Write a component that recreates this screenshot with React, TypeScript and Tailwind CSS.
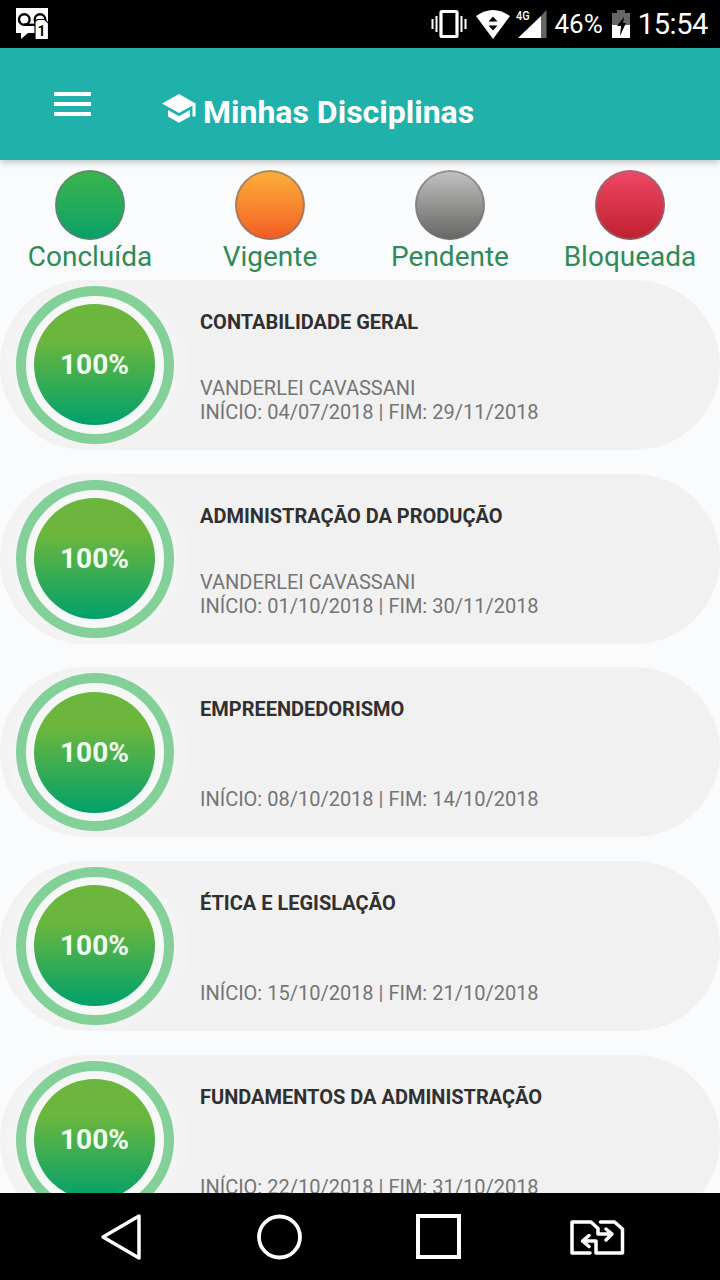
import React from 'react';

interface Subject {
  title: string;
  teacher?: string;
  start: string;
  end: string;
  progress: number;
}

const SUBJECTS: Subject[] = [
  { title: 'CONTABILIDADE GERAL', teacher: 'VANDERLEI CAVASSANI', start: '04/07/2018', end: '29/11/2018', progress: 100 },
  { title: 'ADMINISTRAÇÃO DA PRODUÇÃO', teacher: 'VANDERLEI CAVASSANI', start: '01/10/2018', end: '30/11/2018', progress: 100 },
  { title: 'EMPREENDEDORISMO', start: '08/10/2018', end: '14/10/2018', progress: 100 },
  { title: 'ÉTICA E LEGISLAÇÃO', start: '15/10/2018', end: '21/10/2018', progress: 100 },
  { title: 'FUNDAMENTOS DA ADMINISTRAÇÃO', start: '22/10/2018', end: '31/10/2018', progress: 100 },
];

const LEGEND = [
  { label: 'Concluída', color: 'from-[#39b54a] to-[#00a069]' },
  { label: 'Vigente', color: 'from-[#fbb03b] to-[#f15a24]' },
  { label: 'Pendente', color: 'from-[#c4c4c4] to-[#666563]' },
  { label: 'Bloqueada', color: 'from-[#f04866] to-[#be1e2d]' },
];

const StatusBar = () => (
  <div className="flex h-12 shrink-0 items-center bg-black pr-3 pl-[15px] text-white">
    <svg width="34" height="34" viewBox="0 0 34 34">
      <path d="M1 1h32v25H13l-7 6v-6H1z" fill="#fff" />
      <g fill="none" stroke="#000" strokeWidth="2.4">
        <circle cx="9.300" cy="12.500" r="5.300" />
        <circle cx="25" cy="12.500" r="5.300" />
        <path d="M9 17.800h16" />
      </g>
      <path d="M20 14.500l2.500-2h7l4 3.500v16.500H20z" fill="#fff" stroke="#000" strokeWidth="1.200" />
      <text x="26.500" y="29" fill="#000" fontSize="14" fontWeight="700" textAnchor="middle">1</text>
    </svg>

    <div className="ml-auto flex items-center">
      <svg width="36" height="32" viewBox="0 0 36 32" fill="none" stroke="#fff">
        <rect x="10" y="3.500" width="16" height="25" rx="1" strokeWidth="3.200" />
        <path d="M1.500 11v10M5.500 8v16M30.500 8v16M34.500 11v10" strokeWidth="2" />
      </svg>
      <svg width="36" height="32" viewBox="0 0 36 32" className="ml-[8px]">
        <path d="M1 8Q18-4 35 8L18 31z" fill="#fff" />
        <path d="M13.500 13.500L18 8.500l4.500 5zM13.500 17.500h9L18 22.500z" fill="#000" />
      </svg>
      <svg width="32" height="32" viewBox="0 0 32 32" className="ml-[5px]">
        <path d="M30.500 2v28H25V8z" fill="#666" />
        <path d="M2 30L25 8v22z" fill="#fff" />
        <text x="0" y="12" fill="#fff" fontSize="12.500" fontWeight="500" textLength="13.500" lengthAdjust="spacingAndGlyphs">4G</text>
      </svg>
      <span className="ml-[7px] text-[26px] leading-none">46%</span>
      <svg width="20" height="30" viewBox="0 0 20 30" className="ml-[8px]">
        <path d="M1 4h5V1h8v3h5v12H1z" fill="#666" />
        <path d="M1 16h18v13H1z" fill="#fff" />
        <path d="M13 8l-7 9h4l-1 10 6-13h-3z" fill="#000" />
      </svg>
      <span className="ml-[7px] text-[29px] leading-none tracking-[-0.4px]">15:54</span>
    </div>
  </div>
);

const Header = () => (
  <header className="z-10 flex h-28 shrink-0 items-center bg-[#21b1ab] pl-[54px] text-white shadow-[0_2px_7px_rgba(0,0,0,0.25)]">
    <svg width="37" height="24" viewBox="0 0 37 24" fill="#fff">
      <path d="M0 0h37v4H0zM0 10h37v4H0zM0 20h37v4H0z" />
    </svg>
    <svg width="34" height="30" viewBox="0 0 34 30" className="mt-[9px] ml-[71px]" fill="#fff">
      <path d="M17 0L0 9.500l17 9.500 13.500-7.500V22.500h3V9.500zM6 16v6.500l11 6.300 11-6.300V16l-11 6.300z" />
    </svg>
    <h1 className="mt-4 ml-[7px] text-[32px] leading-none font-bold">Minhas Disciplinas</h1>
  </header>
);

const Legend = () => (
  <div className="grid h-[120px] shrink-0 grid-cols-4 pt-[10px]">
    {LEGEND.map((item) => (
      <div key={item.label} className="flex flex-col items-center">
        <div className={`h-[70px] w-[70px] rounded-full border-2 border-[#777]/60 bg-linear-to-b bg-origin-border ${item.color}`} />
        <span className="text-[28px] leading-[33px] text-[#2e8b57]">{item.label}</span>
      </div>
    ))}
  </div>
);

const SubjectCard: React.FC<{ subject: Subject }> = ({ subject }) => (
  <div className="flex h-[170px] shrink-0 overflow-hidden rounded-full bg-[#f1f1f1]">
    <div className="flex h-full w-[190px] shrink-0 items-center justify-center rounded-full bg-radial from-[#f5f5f5] from-60% to-[#f2f2f2] to-70%">
      <div className="flex h-[158px] w-[158px] rounded-full border-[10px] border-[#83d098] bg-[#f6f8f8] pt-[8.2px] pl-2">
        <div className="flex h-[121px] w-[121px] items-center justify-center rounded-full bg-linear-to-b/srgb from-[#6cb63d] from-30% to-[#00a16c] pt-px text-[28px] font-bold text-[#f1fff1]">
          {subject.progress}%
        </div>
      </div>
    </div>
    <div className="flex flex-col justify-between pt-[30px] pb-[26px] pl-[10px] text-[20px] leading-6 text-[#757575]">
      <h2 className="font-bold text-[#303030]">{subject.title}</h2>
      <div>
        {subject.teacher && <p>{subject.teacher}</p>}
        <p>
          INÍCIO: {subject.start} | FIM: {subject.end}
        </p>
      </div>
    </div>
  </div>
);

const NavBar = () => (
  <nav className="flex h-[87px] shrink-0 items-center bg-black pl-[100px]">
    <svg width="42" height="48" viewBox="0 0 42 48" fill="none" stroke="#fff" strokeWidth="3.500" strokeLinejoin="round">
      <path d="M39 3v42L3 24z" />
    </svg>
    <svg width="46" height="46" viewBox="0 0 46 46" className="ml-[114px]" fill="none" stroke="#fff" strokeWidth="3.800">
      <circle cx="23.500" cy="23" r="20.500" />
    </svg>
    <svg width="46" height="46" viewBox="0 0 46 46" className="ml-[114px]" fill="none" stroke="#fff" strokeWidth="4">
      <rect x="2" y="2" width="41" height="41" />
    </svg>
    <svg width="56" height="36" viewBox="0 0 56 36" className="ml-[107px]" fill="none" stroke="#fff" strokeWidth="3.500" strokeLinejoin="round" strokeLinecap="round">
      <path d="M21 34H3V3h19l7 6.500V15h13M37 10l6 5-6 6" />
      <path d="M31.500 3h14l8 7v24H27V22H14M20 16.500l-6.500 5.500 6.500 5.500" />
    </svg>
  </nav>
);

export default function App() {
  return (
    <div className="flex h-[1280px] w-[720px] flex-col overflow-hidden bg-[#fafbfd] font-[Roboto,sans-serif]">
      <StatusBar />
      <Header />
      <main className="flex min-h-0 flex-1 flex-col overflow-hidden">
        <Legend />
        <div className="flex flex-col gap-[23.7px]">
          {SUBJECTS.map((subject) => (
            <SubjectCard key={subject.title} subject={subject} />
          ))}
        </div>
      </main>
      <NavBar />
    </div>
  );
}
